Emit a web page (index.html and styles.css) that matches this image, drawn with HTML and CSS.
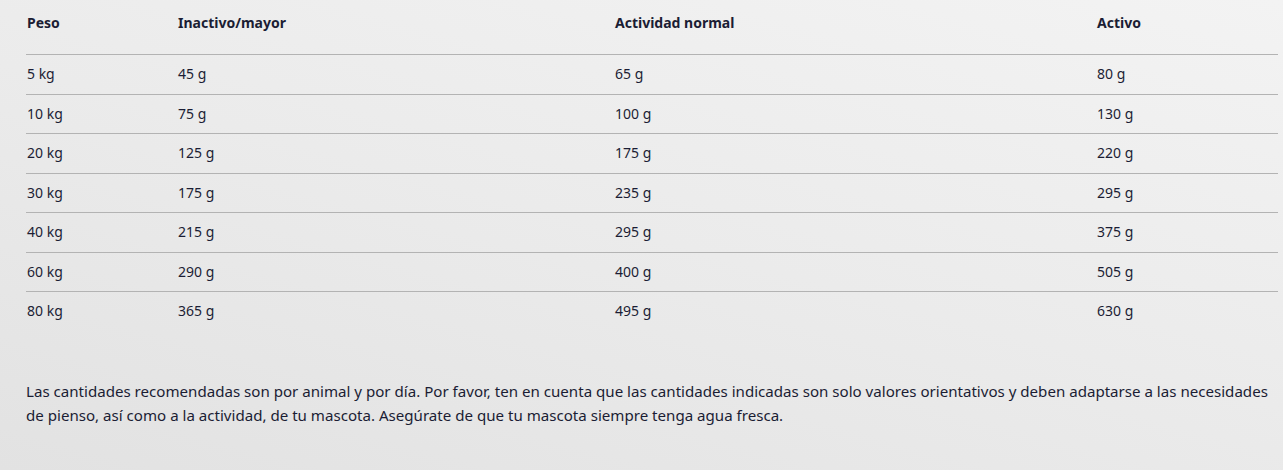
FILE: index.html
```html
<!DOCTYPE html>
<html lang="es">
<head>
<meta charset="utf-8">
<title>Cantidades recomendadas</title>
<link rel="stylesheet" href="styles.css">
</head>
<body>
<main class="page">
  <table class="feed-table">
    <colgroup>
      <col class="c1"><col class="c2"><col class="c3"><col class="c4">
    </colgroup>
    <thead>
      <tr><th>Peso</th><th>Inactivo/mayor</th><th>Actividad normal</th><th>Activo</th></tr>
    </thead>
    <tbody>
      <tr><td>5 kg</td><td>45 g</td><td>65 g</td><td>80 g</td></tr>
      <tr><td>10 kg</td><td>75 g</td><td>100 g</td><td>130 g</td></tr>
      <tr><td>20 kg</td><td>125 g</td><td>175 g</td><td>220 g</td></tr>
      <tr><td>30 kg</td><td>175 g</td><td>235 g</td><td>295 g</td></tr>
      <tr><td>40 kg</td><td>215 g</td><td>295 g</td><td>375 g</td></tr>
      <tr><td>60 kg</td><td>290 g</td><td>400 g</td><td>505 g</td></tr>
      <tr><td>80 kg</td><td>365 g</td><td>495 g</td><td>630 g</td></tr>
    </tbody>
  </table>
  <p class="note">Las cantidades recomendadas son por animal y por día. Por favor, ten en cuenta que las cantidades indicadas son solo valores orientativos y deben adaptarse a las necesidades de pienso, así como a la actividad, de tu mascota. Asegúrate de que tu mascota siempre tenga agua fresca.</p>
</main>
</body>
</html>
```

FILE: styles.css
```css
html, body {
  margin: 0;
  height: 100%;
}
body {
  font-family: "Noto Sans", "Open Sans", sans-serif;
  color: #1b1d34;
  background: linear-gradient(195deg, #f3f3f3 0%, #ebebeb 50%, #e2e2e2 100%);
  min-height: 470px;
}
.page {
  padding: 0 5px 0 26px;
}
.feed-table {
  width: 100%;
  border-collapse: collapse;
  table-layout: fixed;
  font-size: 14px;
}
.c1 { width: 152px; }
.c2 { width: 437px; }
.c3 { width: 482px; }
.c4 { width: auto; }
.feed-table th {
  text-align: left;
  font-weight: 700;
  line-height: 20.5px;
  padding: 13px 0 20.5px 0;
}
.feed-table td {
  line-height: 20.5px;
  padding: 9.25px 0 8.75px 0;
}
.feed-table th:first-child,
.feed-table td:first-child {
  padding-left: 1px;
}
.feed-table tbody tr {
  border-top: 1px solid #b3b3b3;
}
.note {
  margin: 48.5px 0 0;
  font-size: 15.1px;
  line-height: 24px;
}
```
